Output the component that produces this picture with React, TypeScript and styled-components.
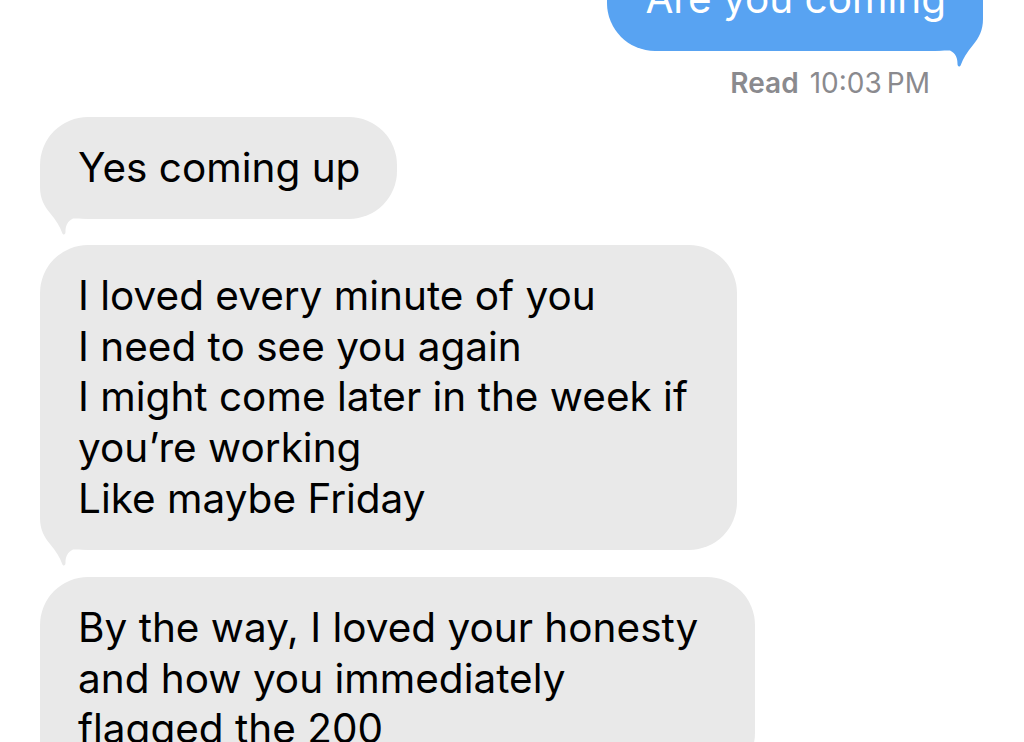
import React from "react";
import styled, { createGlobalStyle } from "styled-components";

const GlobalStyle = createGlobalStyle`
  html, body {
    margin: 0;
    padding: 0;
    background: #ffffff;
  }
  body {
    font-family: Inter, "Noto Sans", "Liberation Sans", sans-serif;
    -webkit-font-smoothing: antialiased;
  }
`;

const Screen = styled.div`
  width: 1024px;
  height: 742px;
  overflow: hidden;
  background: #ffffff;
`;

const Thread = styled.div`
  display: flex;
  flex-direction: column;
  align-items: flex-start;
  padding: 0 41px 0 40px;
  margin-top: -52px;
`;

const Bubble = styled.div<{ $sent?: boolean; $width?: number; $gap?: number }>`
  position: relative;
  box-sizing: border-box;
  align-self: ${(p) => (p.$sent ? "flex-end" : "flex-start")};
  width: ${(p) => (p.$width ? `${p.$width}px` : "auto")};
  margin-top: ${(p) => p.$gap ?? 0}px;
  padding: 26px 37px 26px 38px;
  border-radius: 48px;
  background: ${(p) => (p.$sent ? "#58a3f2" : "#e9e9e9")};
  color: ${(p) => (p.$sent ? "#ffffff" : "#000000")};
  font-size: 40.5px;
  line-height: 50.6px;
  letter-spacing: 0;
  white-space: nowrap;
`;

const BubbleText = styled.span`
  position: relative;
  z-index: 1;
`;

const Tail = styled.svg<{ $sent?: boolean }>`
  position: absolute;
  z-index: 0;
  bottom: -18px;
  width: 50px;
  height: 66px;
  ${(p) => (p.$sent ? "right: 0; transform: scaleX(-1);" : "left: 0;")}
`;

const Receipt = styled.div`
  align-self: flex-end;
  margin: 16px 53px 0 0;
  font-size: 28px;
  line-height: 32px;
  color: #8a8a8e;
`;

const ReceiptLabel = styled.span`
  font-weight: 600;
  margin-right: 11px;
`;

const BubbleTail = ({ sent, color }: { sent?: boolean; color: string }) => (
  <Tail $sent={sent} viewBox="0 0 50 66" aria-hidden>
    <path
      d="M0 0 L0 16 C0 27 4 35 10 42 C16 49 20 56 22 61.5 C23 64.5 25.5 64 25.5 61 C25.5 55 27 50.5 33 47.5 L50 47.5 L50 0 Z"
      fill={color}
    />
  </Tail>
);

const Message = ({
  sent,
  width,
  gap,
  children,
}: {
  sent?: boolean;
  width?: number;
  gap?: number;
  children: React.ReactNode;
}) => (
  <Bubble $sent={sent} $width={width} $gap={gap}>
    <BubbleTail sent={sent} color={sent ? "#58a3f2" : "#e9e9e9"} />
    <BubbleText>{children}</BubbleText>
  </Bubble>
);

export default function App() {
  return (
    <Screen>
      <GlobalStyle />
      <Thread>
        <Message sent>Are you coming</Message>
        <Receipt>
          <ReceiptLabel>Read</ReceiptLabel>10:03&#8201;PM
        </Receipt>
        <Message gap={18}>Yes coming up</Message>
        <Message gap={26} width={697}>
          I loved every minute of you
          <br />
          I need to see you again
          <br />
          I might come later in the week if
          <br />
          you’re working
          <br />
          Like maybe Friday
        </Message>
        <Message gap={27} width={715}>
          By the way, I loved your honesty
          <br />
          and how you immediately
          <br />
          flagged the 200
        </Message>
      </Thread>
    </Screen>
  );
}
